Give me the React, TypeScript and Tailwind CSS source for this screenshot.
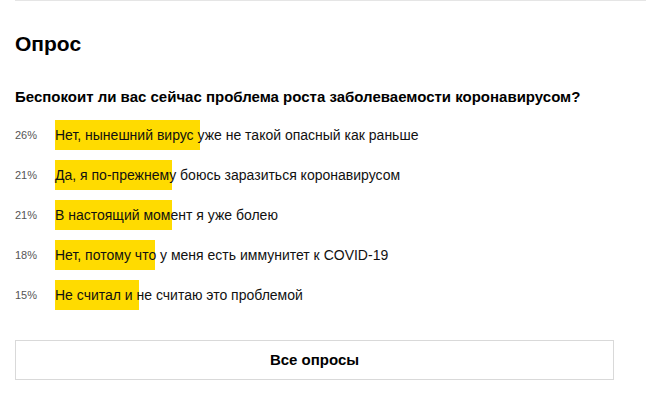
import React from "react";

const options = [
  { pct: 26, text: "Нет, нынешний вирус уже не такой опасный как раньше" },
  { pct: 21, text: "Да, я по-прежнему боюсь заразиться коронавирусом" },
  { pct: 21, text: "В настоящий момент я уже болею" },
  { pct: 18, text: "Нет, потому что у меня есть иммунитет к COVID-19" },
  { pct: 15, text: "Не считал и не считаю это проблемой" },
];

export default function App() {
  return (
    <div
      className="w-[646px] h-[396px] bg-white pl-[15px] text-black overflow-hidden"
      style={{ fontFamily: '"Liberation Sans", Arial, sans-serif' }}
    >
      <div className="border-t border-[#e5e5e5]" />
      <h2 className="mt-[31px] text-[21px] leading-[24px] font-bold">Опрос</h2>
      <div className="mt-[32px] text-[15px] leading-[17px] font-bold">
        Беспокоит ли вас сейчас проблема роста заболеваемости коронавирусом?
      </div>
      <div className="mt-[15px] flex flex-col gap-[10px] w-[599px]">
        {options.map((o, i) => (
          <div key={i} className="flex items-center h-[30px]">
            <div className="w-[40px] text-[11px] text-[#555]">{o.pct}%</div>
            <div className="relative flex-1 h-[30px] flex items-center">
              <div
                className="absolute left-0 top-0 h-full bg-[#ffdb00]"
                style={{ width: `${(o.pct / 100) * 558}px` }}
              />
              <span className="relative text-[14px] leading-[16px] text-[#111]">{o.text}</span>
            </div>
          </div>
        ))}
      </div>
      <div className="mt-[30px] w-[599px] h-[40px] border border-[#d9d9d9] flex items-center justify-center text-[15px] font-bold">
        Все опросы
      </div>
    </div>
  );
}
